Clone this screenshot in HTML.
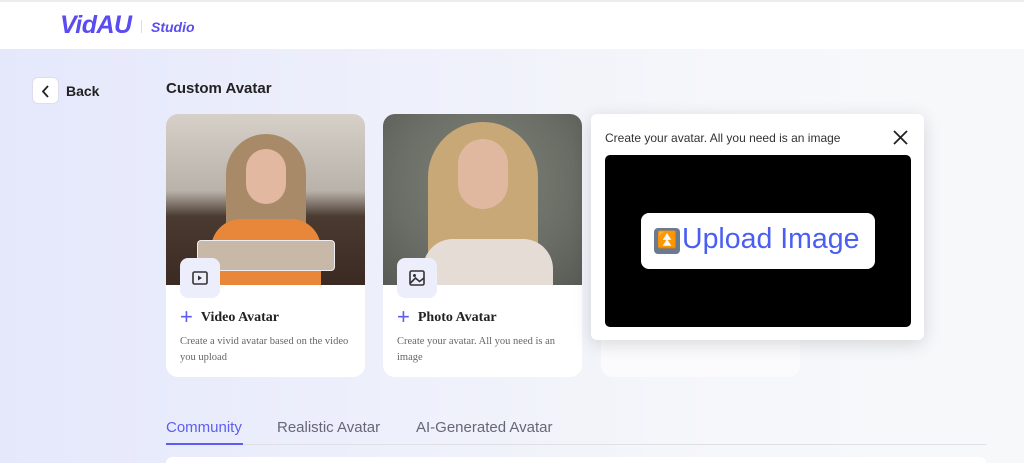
<!DOCTYPE html>
<html><head><meta charset="utf-8">
<style>
*{box-sizing:border-box;margin:0;padding:0}
body{width:1024px;height:461px;overflow:hidden;font-family:"Liberation Sans",sans-serif;background:linear-gradient(90deg,#e5e8fb 0%,#eef0fb 40%,#f6f7fa 70%,#f7f8fa 100%);position:relative}
.hdr{position:absolute;left:0;top:0;width:1024px;height:49px;background:#fff;border-top:2px solid #ececf0}
.logo{position:absolute;left:60px;top:9px;font-size:25px;font-weight:bold;font-style:italic;color:#5b4cf0;letter-spacing:-0.5px}
.sep{position:absolute;left:141px;top:18px;width:1px;height:13px;background:#ddd}
.studio{position:absolute;left:151px;top:17px;font-size:14px;font-weight:bold;font-style:italic;color:#5b4cf0}
.back{position:absolute;left:32px;top:77px;width:27px;height:27px;background:#fff;border:1px solid #dde;border-radius:6px}
.backt{position:absolute;left:66px;top:83px;font-size:14px;font-weight:bold;color:#222}
.title{position:absolute;left:166px;top:80px;font-size:15px;font-weight:bold;color:#222}
.card{position:absolute;top:114px;width:199px;height:263px;background:#fff;border-radius:12px;overflow:hidden}
.img{position:absolute;left:0;top:0;width:199px;height:171px}
.ib{position:absolute;left:14px;top:144px;width:40px;height:40px;background:#eceefb;border-radius:8px}
.ct{position:absolute;left:14px;top:190px;font-family:"Liberation Serif",serif;font-weight:bold;font-size:14px;color:#222}
.ct b{color:#5b5ef0;font-family:"Liberation Sans";font-weight:normal;font-size:22px;vertical-align:-3px;margin-right:8px}
.cd{position:absolute;left:14px;top:220px;width:180px;font-family:"Liberation Serif",serif;font-size:10.5px;line-height:15.5px;color:#666}
.pop{position:absolute;left:591px;top:114px;width:333px;height:226px;background:#fff;border-radius:6px;box-shadow:0 4px 18px rgba(0,0,0,.14)}
.tabs{position:absolute;top:419px;font-size:15px;color:#667}
</style></head><body>
<div class="hdr"><div class="logo">VidAU</div><div class="sep"></div><div class="studio">Studio</div></div>
<div class="back"><svg width="27" height="27" viewBox="0 0 27 27"><path d="M15 8l-5 5.5 5 5.5" fill="none" stroke="#222" stroke-width="1.8"/></svg></div>
<div class="backt">Back</div>
<div class="title">Custom Avatar</div>

<div class="card" style="left:166px">
 <div class="img" style="background:linear-gradient(180deg,#d6d0c8 0%,#b9b2aa 45%,#4a3a30 60%,#3b2a22 100%)">
  <div style="position:absolute;left:60px;top:20px;width:80px;height:151px;background:#a88a68;border-radius:40px 40px 0 0"></div>
  <div style="position:absolute;left:80px;top:35px;width:40px;height:55px;background:#e2b8a0;border-radius:20px"></div>
  <div style="position:absolute;left:45px;top:105px;width:110px;height:66px;background:#e8873a;border-radius:30px 30px 0 0"></div>
  <div style="position:absolute;left:31px;top:126px;width:138px;height:31px;background:#c8b8a8;border:1.5px solid #eee;border-radius:4px"></div>
 </div>
 <div class="ib"><svg width="40" height="40" viewBox="0 0 40 40"><rect x="13" y="14" width="14" height="12" rx="1.5" fill="none" stroke="#333" stroke-width="1.6"/><path d="M18 17.5v5l4-2.5z" fill="#333"/></svg></div>
 <div class="ct"><b>+</b>Video Avatar</div>
 <div class="cd">Create a vivid avatar based on the video you upload</div>
</div>

<div class="card" style="left:383px">
 <div class="img" style="background:radial-gradient(circle at 50% 40%,#7f8479 0%,#6a6e66 60%,#585b55 100%)">
  <div style="position:absolute;left:45px;top:8px;width:110px;height:163px;background:#c9a878;border-radius:55px 55px 20px 20px"></div>
  <div style="position:absolute;left:75px;top:25px;width:50px;height:70px;background:#e0b8a0;border-radius:25px"></div>
  <div style="position:absolute;left:40px;top:125px;width:130px;height:46px;background:#e6dcd6;border-radius:30px 30px 0 0"></div>
 </div>
 <div class="ib"><svg width="40" height="40" viewBox="0 0 40 40"><rect x="13" y="13" width="14" height="14" rx="1.5" fill="none" stroke="#333" stroke-width="1.6"/><circle cx="17.5" cy="17.5" r="1.5" fill="#333"/><path d="M13.5 25l5-5 4 3.5 4.5-3.5" fill="none" stroke="#333" stroke-width="1.6"/></svg></div>
 <div class="ct"><b>+</b>Photo Avatar</div>
 <div class="cd">Create your avatar. All you need is an image</div>
</div>

<div class="card" style="left:601px;background:#fbfbfd"></div>

<div class="pop">
 <div style="position:absolute;left:14px;top:17px;font-size:12px;color:#333">Create your avatar. All you need is an image</div>
 <svg style="position:absolute;left:302px;top:16px" width="15" height="15" viewBox="0 0 15 15"><path d="M1 1l13 13M14 1L1 14" stroke="#222" stroke-width="1.8"/></svg>
 <div style="position:absolute;left:14px;top:41px;width:306px;height:172px;background:#000;border-radius:5px">
  <div style="position:absolute;left:36px;top:58px;width:234px;height:56px;background:#fff;border-radius:8px;">
   <div style="position:absolute;left:13px;top:15px;width:26px;height:26px;background:#6b7a8f;border-radius:4px;color:#fff;font-size:16px;text-align:center;line-height:26px">⏫</div>
   <div style="position:absolute;left:41px;top:10px;font-size:28.5px;color:#4b5ef2">Upload Image</div>
  </div>
 </div>
</div>

<div class="tabs" style="left:166px;color:#5b5ef0">Community</div>
<div style="position:absolute;left:166px;top:443px;width:77px;height:2px;background:#5b5ef0"></div>
<div class="tabs" style="left:277px">Realistic Avatar</div>
<div class="tabs" style="left:416px">AI-Generated Avatar</div>
<div style="position:absolute;left:243px;top:444px;width:743px;height:1px;background:#dfe0e6"></div>
<div style="position:absolute;left:166px;top:457px;width:820px;height:6px;background:#fff;border-radius:6px 6px 0 0"></div>
</body></html>
